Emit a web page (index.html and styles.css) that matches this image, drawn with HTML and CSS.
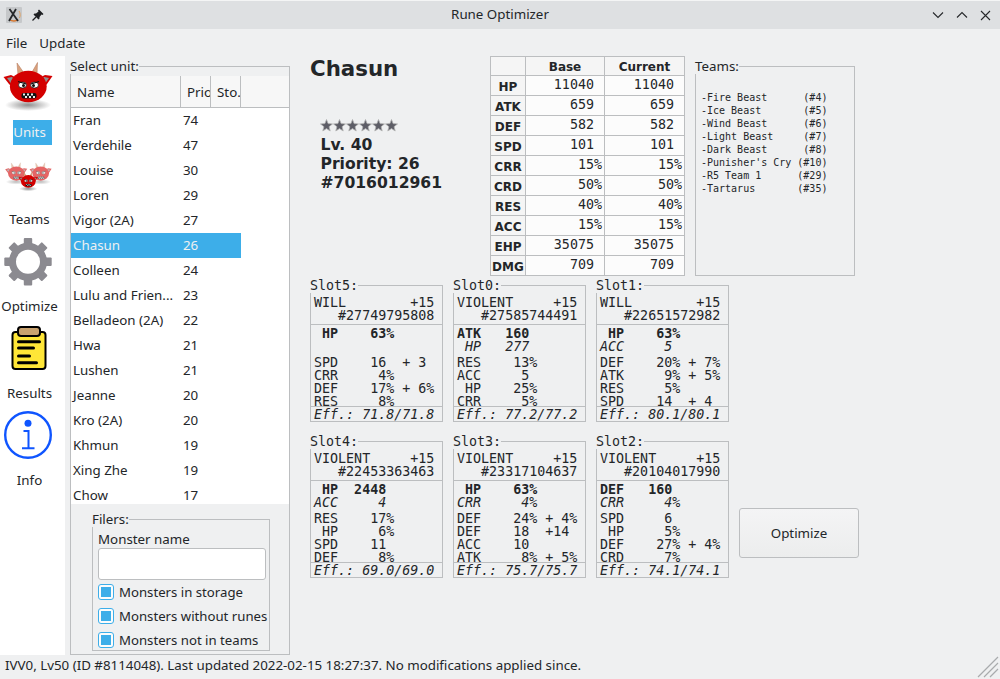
FILE: index.html
```html
<!DOCTYPE html>
<html lang="en">
<head>
<meta charset="utf-8">
<title>Rune Optimizer</title>
<link rel="stylesheet" href="styles.css">
</head>
<body>
<div class="window">
  <header class="titlebar">
    <div class="tb-left">
      <svg class="app-icon" width="16" height="16" viewBox="0 0 16 16"><rect width="16" height="16" rx="1" fill="#c6c8ca"/><path d="M12 12.5c-2 2-6 2-8.500 0" fill="none" stroke="#d9772e" stroke-width="1.300"/><path d="M13 4c1.500 2 1.500 5 .5 7" fill="none" stroke="#e0a060" stroke-width="1"/><path d="M3.500 2 12 14M10 2 3 14" fill="none" stroke="#26282b" stroke-width="1.800"/></svg>
      <svg class="pin-icon" width="12" height="12" viewBox="0 0 12 12"><path d="M7 .5 11.500 5 10.500 6 9.500 5.500 7.500 8 7.500 9.500 6.500 10.500 1.500 5.500 2.500 4.500 4 4.500 6.500 2.500 6 1.500Z" fill="#1d1f22"/><path d="M4 8 .5 11.500" stroke="#1d1f22" stroke-width="1.300"/></svg>
    </div>
    <div class="tb-title">Rune Optimizer</div>
    <div class="tb-right">
      <svg width="12" height="8" viewBox="0 0 12 8"><path d="M1 1.500 6 6.500 11 1.500" class="tb-glyph"/></svg>
      <svg width="12" height="8" viewBox="0 0 12 8"><path d="M1 6.500 6 1.500 11 6.500" class="tb-glyph"/></svg>
      <svg width="11" height="11" viewBox="0 0 11 11"><path d="M1 1 10 10M10 1 1 10" class="tb-glyph"/></svg>
    </div>
  </header>
  <nav class="menubar"><span class="menu-item">File</span><span class="menu-item">Update</span></nav>
  <main class="main">
    <aside class="side">
      <div class="nav-item">
        <svg class="nav-icon" width="65" height="62" viewBox="0 0 65 62">
          <defs>
            <radialGradient id="shadow"><stop offset="0" stop-color="#8f8f8f"/><stop offset="1" stop-color="#fff"/></radialGradient>
            <g id="imp">
              <ellipse cx="28" cy="47" rx="23" ry="6" fill="url(#shadow)"/>
              <path d="M17 5 18 17 24 15Z" fill="#d9a27e" stroke="#b07050" stroke-width=".5"/>
              <path d="M37.500 4.500 31.500 15 37 17Z" fill="#d9a27e" stroke="#b07050" stroke-width=".5"/>
              <path d="M3.500 19 11 17 19 21 14 31 9 26Z" fill="#d40000"/>
              <path d="M7 20 12 19 15 22 12 27Z" fill="#8f8f8f"/>
              <path d="M52.500 18 45 17 37 21 42 31 47 26Z" fill="#d40000"/>
              <path d="M49 20 44 19 41 22 44 27Z" fill="#8f8f8f"/>
              <ellipse cx="28.300" cy="28.500" rx="18.400" ry="15.800" fill="#d40000"/>
              <ellipse cx="22.500" cy="27" rx="4" ry="3" fill="#fff" stroke="#111" stroke-width=".7"/>
              <ellipse cx="34.500" cy="27" rx="4" ry="3" fill="#fff" stroke="#111" stroke-width=".7"/>
              <circle cx="23.500" cy="27.500" r="1.500" fill="#111"/>
              <circle cx="33.500" cy="27.500" r="1.500" fill="#111"/>
              <path d="M18 23.500 26 26M39 23.500 31 26" stroke="#111" stroke-width="1.300"/>
              <rect x="21.500" y="35" width="15" height="5.500" rx="2" fill="#111"/>
              <path d="M23 35.500h2v2h-2zM27 35.500h2v2h-2zM31 35.500h2v2h-2zM25 38h2v2h-2zM29 38h2v2h-2zM33 38h2v2h-2z" fill="#eee"/>
            </g>
          </defs>
          <use href="#imp"/>
        </svg>
        <div class="nav-label"><span class="nav-text selected">Units</span></div>
      </div>
      <div class="nav-item">
        <svg class="nav-icon" width="65" height="62" viewBox="0 0 65 62">
          <g opacity=".6"><use href="#imp" transform="translate(3.600 15.700) scale(.45)"/><use href="#imp" transform="translate(28 15.700) scale(.45)"/></g>
          <use href="#imp" transform="translate(17 25) scale(.4)"/>
        </svg>
        <div class="nav-label"><span class="nav-text">Teams</span></div>
      </div>
      <div class="nav-item">
        <svg class="nav-icon" width="65" height="62" viewBox="0 0 65 62">
          <g fill="#8b8a90" transform="translate(28 29.700)">
            <rect x="-4.200" y="-23.700" width="8.400" height="9" rx="1"/>
            <rect x="-4.200" y="-23.700" width="8.400" height="9" rx="1" transform="rotate(45)"/>
            <rect x="-4.200" y="-23.700" width="8.400" height="9" rx="1" transform="rotate(90)"/>
            <rect x="-4.200" y="-23.700" width="8.400" height="9" rx="1" transform="rotate(135)"/>
            <rect x="-4.200" y="-23.700" width="8.400" height="9" rx="1" transform="rotate(180)"/>
            <rect x="-4.200" y="-23.700" width="8.400" height="9" rx="1" transform="rotate(225)"/>
            <rect x="-4.200" y="-23.700" width="8.400" height="9" rx="1" transform="rotate(270)"/>
            <rect x="-4.200" y="-23.700" width="8.400" height="9" rx="1" transform="rotate(315)"/>
            <circle r="15.500" fill="none" stroke="#8b8a90" stroke-width="7"/>
          </g>
        </svg>
        <div class="nav-label"><span class="nav-text">Optimize</span></div>
      </div>
      <div class="nav-item">
        <svg class="nav-icon" width="65" height="62" viewBox="0 0 65 62">
          <rect x="12.500" y="13" width="33" height="37" rx="3" fill="#ffe637" stroke="#000" stroke-width="2"/>
          <rect x="18" y="8" width="22" height="9" rx="3" fill="#c9a26f" stroke="#000" stroke-width="2"/>
          <path d="M18.500 22.700H39.500M18.500 29H33.500M18.500 37H29.500M18.500 43.700H36.500" stroke="#000" stroke-width="3" stroke-linecap="round"/>
        </svg>
        <div class="nav-label"><span class="nav-text">Results</span></div>
      </div>
      <div class="nav-item">
        <svg class="nav-icon" width="65" height="62" viewBox="0 0 65 62">
          <circle cx="28" cy="29" r="22.800" fill="none" stroke="#0f55ff" stroke-width="2.400"/>
          <circle cx="28" cy="17.300" r="3.500" fill="#0f55ff"/>
          <path d="M23.500 25H28.500V42M22 42.300H34.500" fill="none" stroke="#0f55ff" stroke-width="2"/>
        </svg>
        <div class="nav-label"><span class="nav-text">Info</span></div>
      </div>
    </aside>

    <fieldset class="group units">
      <legend class="group-title">Select unit:</legend>
      <div class="list-head">
        <div class="hcell h-name">Name</div>
        <div class="hcell h-prio">Prio</div>
        <div class="hcell h-sto">Sto.</div>
      </div>
      <div class="list">
        <div class="row"><span class="c-name">Fran</span><span class="c-prio">74</span></div>
        <div class="row"><span class="c-name">Verdehile</span><span class="c-prio">47</span></div>
        <div class="row"><span class="c-name">Louise</span><span class="c-prio">30</span></div>
        <div class="row"><span class="c-name">Loren</span><span class="c-prio">29</span></div>
        <div class="row"><span class="c-name">Vigor (2A)</span><span class="c-prio">27</span></div>
        <div class="row selected"><span class="c-name">Chasun</span><span class="c-prio">26</span></div>
        <div class="row"><span class="c-name">Colleen</span><span class="c-prio">24</span></div>
        <div class="row"><span class="c-name">Lulu and Frien...</span><span class="c-prio">23</span></div>
        <div class="row"><span class="c-name">Belladeon (2A)</span><span class="c-prio">22</span></div>
        <div class="row"><span class="c-name">Hwa</span><span class="c-prio">21</span></div>
        <div class="row"><span class="c-name">Lushen</span><span class="c-prio">21</span></div>
        <div class="row"><span class="c-name">Jeanne</span><span class="c-prio">20</span></div>
        <div class="row"><span class="c-name">Kro (2A)</span><span class="c-prio">20</span></div>
        <div class="row"><span class="c-name">Khmun</span><span class="c-prio">19</span></div>
        <div class="row"><span class="c-name">Xing Zhe</span><span class="c-prio">19</span></div>
        <div class="row"><span class="c-name">Chow</span><span class="c-prio">17</span></div>
      </div>
      <fieldset class="group filters">
        <legend class="group-title">Filers:</legend>
        <div class="filter-label">Monster name</div>
        <input class="filter-input" type="text" aria-label="Monster name">
        <div class="checks">
          <div class="check"><span class="box"><span class="box-fill"></span></span>Monsters in storage</div>
          <div class="check"><span class="box"><span class="box-fill"></span></span>Monsters without runes</div>
          <div class="check"><span class="box"><span class="box-fill"></span></span>Monsters not in teams</div>
        </div>
      </fieldset>
    </fieldset>

    <section class="detail">
      <div class="top">
        <div class="hero">
          <h1 class="hero-name">Chasun</h1>
          <svg class="stars" width="78" height="13" viewBox="0 0 78 13">
            <defs><path id="star" d="M6.500.5 8.100 4.600 12.500 4.900 9.100 7.700 10.200 12 6.500 9.600 2.800 12 3.900 7.700.5 4.900 4.900 4.600Z" fill="#5d5d66" stroke="#b3b3b3" stroke-width=".8"/></defs>
            <use href="#star"/><use href="#star" x="13"/><use href="#star" x="26"/><use href="#star" x="39"/><use href="#star" x="52"/><use href="#star" x="65"/>
          </svg>
          <div class="hero-info">Lv. 40<br>Priority: 26<br>#7016012961</div>
        </div>
        <table class="stats">
          <colgroup><col class="col-h"><col class="col-b"><col class="col-c"></colgroup>
          <thead><tr><th class="corner"></th><th>Base</th><th>Current</th></tr></thead>
          <tbody>
            <tr><th>HP</th><td>11040 </td><td>11040 </td></tr>
            <tr><th>ATK</th><td>659 </td><td>659 </td></tr>
            <tr><th>DEF</th><td>582 </td><td>582 </td></tr>
            <tr><th>SPD</th><td>101 </td><td>101 </td></tr>
            <tr><th>CRR</th><td>15%</td><td>15%</td></tr>
            <tr><th>CRD</th><td>50%</td><td>50%</td></tr>
            <tr><th>RES</th><td>40%</td><td>40%</td></tr>
            <tr><th>ACC</th><td>15%</td><td>15%</td></tr>
            <tr><th>EHP</th><td>35075 </td><td>35075 </td></tr>
            <tr><th>DMG</th><td>709 </td><td>709 </td></tr>
          </tbody>
        </table>
        <fieldset class="group teams">
          <legend class="group-title">Teams:</legend>
<pre class="team-list">-Fire Beast      (#4)
-Ice Beast       (#5)
-Wind Beast      (#6)
-Light Beast     (#7)
-Dark Beast      (#8)
-Punisher's Cry (#10)
-R5 Team 1      (#29)
-Tartarus       (#35)</pre>
        </fieldset>
      </div>
      <div class="slots">
        <fieldset class="group slot">
          <legend class="slot-title">Slot5:</legend>
<pre class="rune-head">WILL        +15
   #27749795808</pre>
<pre class="rune-main"><b> HP    63%</b>
 </pre>
<pre class="rune-subs">SPD    16  + 3
CRR     4%
DEF    17% + 6%
RES     8%</pre>
<pre class="rune-eff">Eff.: 71.8/71.8</pre>
        </fieldset>
        <fieldset class="group slot">
          <legend class="slot-title">Slot0:</legend>
<pre class="rune-head">VIOLENT     +15
   #27585744491</pre>
<pre class="rune-main"><b>ATK   160</b>
<i> HP   277</i></pre>
<pre class="rune-subs">RES    13%
ACC     5
 HP    25%
CRR     5%</pre>
<pre class="rune-eff">Eff.: 77.2/77.2</pre>
        </fieldset>
        <fieldset class="group slot">
          <legend class="slot-title">Slot1:</legend>
<pre class="rune-head">WILL        +15
   #22651572982</pre>
<pre class="rune-main"><b> HP    63%</b>
<i>ACC     5</i></pre>
<pre class="rune-subs">DEF    20% + 7%
ATK     9% + 5%
RES     5%
SPD    14  + 4</pre>
<pre class="rune-eff">Eff.: 80.1/80.1</pre>
        </fieldset>
        <div class="slot-spacer"></div>
        <fieldset class="group slot">
          <legend class="slot-title">Slot4:</legend>
<pre class="rune-head">VIOLENT     +15
   #22453363463</pre>
<pre class="rune-main"><b> HP  2448</b>
<i>ACC     4</i></pre>
<pre class="rune-subs">RES    17%
 HP     6%
SPD    11
DEF     8%</pre>
<pre class="rune-eff">Eff.: 69.0/69.0</pre>
        </fieldset>
        <fieldset class="group slot">
          <legend class="slot-title">Slot3:</legend>
<pre class="rune-head">VIOLENT     +15
   #23317104637</pre>
<pre class="rune-main"><b> HP    63%</b>
<i>CRR     4%</i></pre>
<pre class="rune-subs">DEF    24% + 4%
DEF    18  +14
ACC    10
ATK     8% + 5%</pre>
<pre class="rune-eff">Eff.: 75.7/75.7</pre>
        </fieldset>
        <fieldset class="group slot">
          <legend class="slot-title">Slot2:</legend>
<pre class="rune-head">VIOLENT     +15
   #20104017990</pre>
<pre class="rune-main"><b>DEF   160</b>
<i>CRR     4%</i></pre>
<pre class="rune-subs">SPD     6
 HP     5%
DEF    27% + 4%
CRD     7%</pre>
<pre class="rune-eff">Eff.: 74.1/74.1</pre>
        </fieldset>
        <button class="optimize" type="button">Optimize</button>
      </div>
    </section>
  </main>
  <footer class="status">
    <span class="status-text">IVV0, Lv50 (ID #8114048). Last updated 2022-02-15 18:27:37. No modifications applied since.</span>
    <svg class="grip" width="22" height="22" viewBox="0 0 22 22"><path d="M21 1 1 21M21 7 7 21M21 13 13 21" stroke="#a9abad" stroke-width="1.200" fill="none"/></svg>
  </footer>
</div>
</body>
</html>
```
FILE: styles.css
```css
* { box-sizing: border-box; }
html, body { margin: 0; padding: 0; }
body {
  width: 1000px;
  height: 679px;
  overflow: hidden;
  font-family: "Noto Sans", sans-serif;
  font-size: 13.33px;
  color: #232629;
  background: #eff0f1;
}
.window { display: flex; flex-direction: column; height: 679px; }

.titlebar {
  flex: none;
  height: 29px;
  display: grid;
  grid-template-columns: 1fr auto 1fr;
  align-items: center;
  background: #dee0e2;
  border-top: 1px solid #f4f5f5;
}
.tb-left { display: flex; align-items: center; gap: 10px; padding-left: 6px; }
.tb-title { line-height: 26px; padding-bottom: 2px; }
.tb-right { display: flex; align-items: center; justify-content: flex-end; gap: 12px; padding-right: 9px; }
.tb-glyph { fill: none; stroke: #26282b; stroke-width: 1.100; }

.menubar { flex: none; height: 27px; display: flex; align-items: center; padding: 1px 0 0 6px; gap: 12px; }
.menu-item { line-height: 26px; }

.main { flex: none; height: 599px; display: flex; }

.side { flex: none; width: 65px; background: #fff; padding-top: 2px; }
.nav-item { height: 87px; }
.nav-icon { display: block; }
.nav-label { width: 59px; height: 25px; text-align: center; line-height: 25px; }
.nav-text { display: inline-block; height: 25px; }
.nav-text.selected { background: #3daee9; color: #eff0f1; padding-right: 6px; margin-right: -6px; }

.group {
  margin: 0;
  padding: 0;
  min-width: 0;
  border: 1px solid #bcbec0;
}
.group-title { padding: 0; margin: 0 0 0 -1px; height: 15px; line-height: 15px; }

.units { flex: none; width: 220px; height: 596px; margin: 3px 0 0 5px; padding-top: 2px; }
.list-head { display: flex; height: 32px; background: #f7f7f7; border-bottom: 1px solid #bcbec0; }
.hcell { height: 31px; line-height: 33px; border-right: 1px solid #bcbec0; overflow: hidden; white-space: nowrap; }
.h-name { width: 110px; padding-left: 6px; }
.h-prio { width: 30px; padding-left: 6px; }
.h-sto { width: 30px; padding-left: 6px; }
.list { height: 396px; overflow: hidden; background: #fff; }
.row { display: flex; width: 170px; height: 25px; line-height: 25px; }
.row.selected { background: #3daee9; color: #eff0f1; }
.c-name { width: 110px; padding-left: 2px; white-space: nowrap; overflow: hidden; }
.c-prio { width: 60px; padding-left: 2px; }

.filters { width: 178px; height: 139px; margin: 8px 0 0 21px; padding: 0 0 0 5px; }
.filters .group-title { margin-left: -6px; }
.filter-label { height: 18px; line-height: 18px; margin-top: 3px; }
.filter-input {
  display: block;
  width: 168px;
  height: 32px;
  background: #fff;
  border: 1px solid #bcbec0;
  border-radius: 3px;
  padding: 0;
}
.checks { display: flex; flex-direction: column; gap: 4px; margin-top: 2px; font-size: 13.2px; }
.check { display: flex; align-items: center; gap: 5px; height: 20px; white-space: nowrap; }
.box {
  flex: none;
  display: flex;
  align-items: center;
  justify-content: center;
  width: 16px;
  height: 16px;
  background: #fcfcfc;
  border: 1px solid #3daee9;
  border-radius: 3px;
}
.box-fill { width: 10px; height: 10px; background: #3daee9; }

.detail { flex: none; padding-left: 20px; }
.top { display: flex; height: 222px; }
.hero { flex: none; width: 180px; }
.hero-name {
  margin: 0;
  height: 25px;
  font: bold 21.33px/25px "DejaVu Sans", sans-serif;
}
.stars { display: block; margin: 38px 0 0 10px; }
.hero-info {
  margin: 4px 0 0 10.500px;
  font: bold 15.600px/19px "DejaVu Sans", sans-serif;
}

.stats {
  flex: none;
  width: 195px;
  height: 220px;
  table-layout: fixed;
  border-collapse: separate;
  border-spacing: 0;
  border-top: 1px solid #bcbec0;
  border-left: 1px solid #bcbec0;
  font: 13.33px/16px "DejaVu Sans Mono", monospace;
}
.col-h { width: 35px; }
.col-b { width: 79px; }
.col-c { width: 80px; }
.stats th, .stats td {
  padding: 0;
  border-right: 1px solid #bcbec0;
  border-bottom: 1px solid #bcbec0;
}
.stats th {
  background: #f5f5f5;
  font: bold 12px/16px "DejaVu Sans", sans-serif;
  text-align: center;
}
.stats thead tr { height: 19px; }
.stats thead th { padding-top: 2px; line-height: 15px; }
.stats tbody tr { height: 20px; }
.stats tbody th { padding-top: 3px; }
.stats td {
  background: #fcfcfc;
  text-align: right;
  white-space: pre;
  padding-right: 2px;
  vertical-align: top;
  padding-top: 1px;
}

.teams { flex: none; width: 160px; height: 217px; margin: 3px 0 0 10px; padding: 17px 0 0 5px; }
.teams .group-title { margin-left: -6px; }
.team-list { margin: 0; font: 10px/13px "DejaVu Sans Mono", monospace; }

.slots {
  display: grid;
  grid-template-columns: repeat(3, 133px) 120px;
  gap: 12px 10px;
}
.slot { width: 133px; font: 13.33px/13px "DejaVu Sans Mono", monospace; }
.slot-title { padding: 0; margin: 0 0 0 -1px; height: 15px; line-height: 15px; }
.slot pre { margin: 0; font: inherit; padding-left: 3px; }
.slot .rune-head { padding-top: 3px; padding-bottom: 2px; border-bottom: 1px solid #bcbec0; }
.slot .rune-main { padding-top: 2px; }
.slot .rune-main b { font-weight: bold; }
.slot .rune-main i { font-style: italic; }
.slot .rune-subs { margin-top: 3px; height: 51px; border-bottom: 1px solid #bcbec0; }
.slot .rune-eff { padding-top: 1px; font-style: italic; }

.optimize {
  align-self: end;
  width: 120px;
  height: 50px;
  margin-bottom: 20px;
  font: 13.33px "Noto Sans", sans-serif;
  color: #232629;
  background: linear-gradient(#f4f4f5, #eceded);
  border: 1px solid #bcbec0;
  border-radius: 3px;
}

.status {
  flex: none;
  height: 24px;
  display: flex;
  justify-content: space-between;
  align-items: flex-end;
  padding: 0 1px 1px 5px;
}
.status-text { line-height: 25px; }
.grip { display: block; }
```
